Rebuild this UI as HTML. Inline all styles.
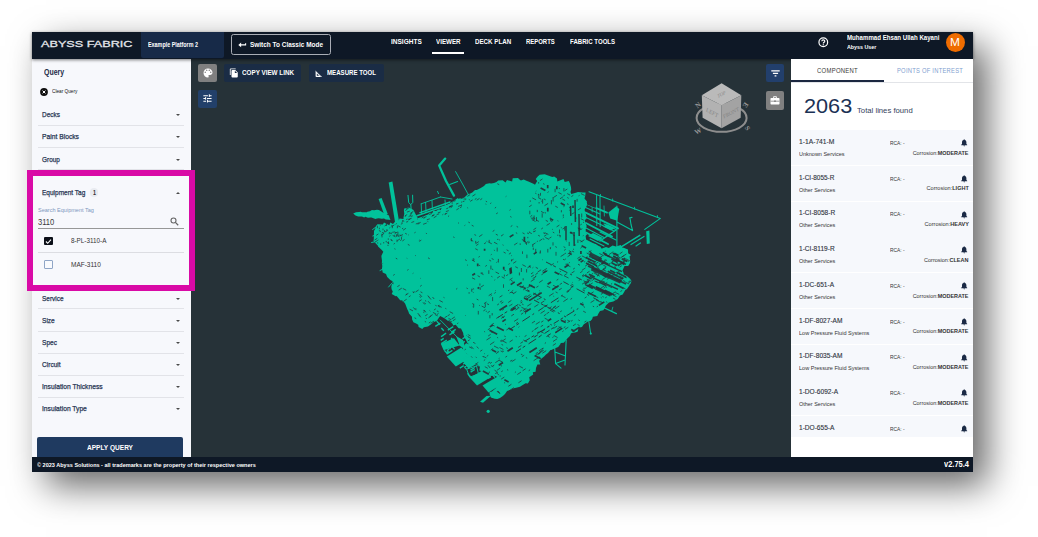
<!DOCTYPE html>
<html lang="en"><head><meta charset="utf-8"><title>Abyss Fabric - Viewer</title>
<style>
html,body{margin:0;padding:0;}
body{width:1038px;height:537px;overflow:hidden;background:#fff;position:relative;font-family:"Liberation Sans",sans-serif;}
#win{position:absolute;left:32px;top:32px;width:941px;height:440px;background:#263238;box-shadow:14px 14px 34px rgba(0,0,0,.6);}
.abs{position:absolute;}
.t{position:absolute;white-space:nowrap;line-height:1;transform-origin:0 50%;}
.t.r{transform-origin:100% 50%;}
.sep{position:absolute;left:37.5px;width:146.3px;height:1px;background:#e2e3e8;}
.arr{position:absolute;width:0;height:0;border-left:2.4px solid transparent;border-right:2.4px solid transparent;border-top:2.7px solid #4a4a4a;}
.item{position:absolute;left:791px;width:182px;height:35px;background:#f6f8fc;}
svg{position:absolute;overflow:visible;}
</style></head><body>
<div id="win"></div>

<div class="abs" style="left:32px;top:59px;width:159.3px;height:398px;background:#f7f8fc;"></div>
<svg style="left:39.5px;top:87.7px" width="8" height="8" viewBox="0 0 8 8"><circle cx="4" cy="4" r="3.9" fill="#111"/><path d="M2.6 2.6 L5.4 5.4 M5.4 2.6 L2.6 5.4" stroke="#fff" stroke-width="1"/></svg>
<div class="sep" style="top:124.7px"></div>
<div class="sep" style="top:147.1px"></div>
<div class="sep" style="top:169.4px"></div>
<div class="sep" style="top:285.5px"></div>
<div class="sep" style="top:308.0px"></div>
<div class="sep" style="top:330.8px"></div>
<div class="sep" style="top:352.7px"></div>
<div class="sep" style="top:374.8px"></div>
<div class="sep" style="top:397.0px"></div>
<div class="arr" style="left:175.7px;top:114.0px"></div>
<div class="arr" style="left:175.7px;top:136.0px"></div>
<div class="arr" style="left:175.7px;top:158.6px"></div>
<div class="arr" style="left:175.7px;top:191.7px;border-top:none;border-bottom:2.7px solid #4a4a4a;"></div>
<div class="arr" style="left:175.7px;top:298.0px"></div>
<div class="arr" style="left:175.7px;top:319.7px"></div>
<div class="arr" style="left:175.7px;top:341.5px"></div>
<div class="arr" style="left:175.7px;top:363.6px"></div>
<div class="arr" style="left:175.7px;top:385.7px"></div>
<div class="arr" style="left:175.7px;top:408.0px"></div>
<div class="abs" style="left:90px;top:188.4px;width:8.2px;height:8.2px;border-radius:50%;background:#e9ebf0;"></div>
<div class="abs" style="left:37.7px;top:228.3px;width:146.1px;height:1px;background:#979797;"></div>
<svg style="left:169.6px;top:217.2px" width="9" height="9" viewBox="0 0 9 9"><circle cx="3.5" cy="3.5" r="2.5" fill="none" stroke="#666" stroke-width="1.1"/><path d="M5.4 5.4 L8.2 8.2" stroke="#666" stroke-width="1.3"/></svg>
<div class="abs" style="left:44.2px;top:236.6px;width:8.8px;height:8.8px;background:#0b0f18;border-radius:1px;"></div>
<svg style="left:44.2px;top:236.6px" width="8.8" height="8.8" viewBox="0 0 8.8 8.8"><path d="M1.9 4.5 L3.7 6.3 L7 2.7" fill="none" stroke="#fff" stroke-width="1.1"/></svg>
<div class="abs" style="left:37.7px;top:251.8px;width:146.1px;height:1px;background:#dcdde2;"></div>
<div class="abs" style="left:44.2px;top:260px;width:6.8px;height:6.8px;border:1px solid #8fa5c6;border-radius:1px;background:#f9fafd;"></div>
<div class="abs" style="left:37.4px;top:437.1px;width:146px;height:20px;background:#1f3a60;border-radius:2px 2px 0 0;"></div>
<div class="abs" style="left:32px;top:32px;width:941px;height:27px;background:#0e1826;box-shadow:0 1px 3px rgba(0,0,0,.5);"></div>
<div class="abs" style="left:141px;top:32px;width:82.6px;height:25.5px;background:#172a48;border-radius:0 0 2px 2px;"></div>
<div class="abs" style="left:231px;top:34.4px;width:98.2px;height:18.2px;border:1.2px solid #a9adb5;border-radius:2.5px;"></div>
<svg style="left:238px;top:40.8px" width="9" height="7" viewBox="0 0 9 7"><path d="M0.3 3.9 L3.1 1.5 V6.3 Z" fill="#fff"/><path d="M2 3.9 H7.6 V2.3" fill="none" stroke="#fff" stroke-width="1.1"/></svg>
<div class="abs" style="left:432px;top:52px;width:32px;height:1.8px;background:#fff;"></div>
<svg style="left:817.5px;top:36.8px" width="10.6" height="10.6" viewBox="0 0 10 10"><circle cx="5" cy="5" r="4.1" fill="none" stroke="#fff" stroke-width="1.15"/><path d="M3.6 4.1 C3.6 2.3 6.4 2.3 6.4 4 C6.4 5 5 5 5 6.2" fill="none" stroke="#fff" stroke-width="1.1"/><rect x="4.45" y="6.8" width="1.1" height="1.1" fill="#fff"/></svg>
<div class="abs" style="left:945.8px;top:33.1px;width:19px;height:19px;border-radius:50%;background:#ef6c00;"></div>
<div class="abs" style="left:27px;top:170px;width:156px;height:109px;border:6px solid #d90aa6;"></div>
<div class="abs" style="left:198px;top:63.8px;width:19px;height:18.7px;background:#808080;border-radius:2px;"></div>
<svg style="left:201.9px;top:67.4px" width="12" height="12" viewBox="0 0 24 24"><path fill="#fff" d="M12 3c-4.97 0-9 4.030-9 9s4.030 9 9 9c.83 0 1.500-.67 1.500-1.500 0-.39-.15-.74-.39-1.010-.23-.26-.38-.61-.38-.99 0-.83.67-1.500 1.500-1.500H16c2.760 0 5-2.240 5-5 0-4.420-4.030-8-9-8zm-5.500 9c-.83 0-1.500-.67-1.500-1.500S5.670 9 6.500 9 8 9.670 8 10.500 7.330 12 6.500 12zm3-4C8.670 8 8 7.330 8 6.500S8.670 5 9.500 5s1.500.67 1.500 1.500S10.330 8 9.500 8zm5 0c-.83 0-1.500-.67-1.500-1.500S13.670 5 14.500 5s1.500.67 1.500 1.500S15.330 8 14.500 8zm3 4c-.83 0-1.500-.67-1.500-1.500S16.670 9 17.500 9s1.500.67 1.500 1.500-.67 1.500-1.500 1.500z"/></svg>
<div class="abs" style="left:198px;top:89.6px;width:19px;height:18.2px;background:#22406a;border-radius:2px;"></div>
<svg style="left:202.3px;top:93px" width="10.94" height="10.94" viewBox="0 0 24 24"><path fill="#fff" d="M3 17v2h6v-2H3zM3 5v2h10V5H3zm10 16v-2h8v-2h-8v-2h-2v6h2zM7 9v2H3v2h4v2h2V9H7zm14 4v-2H11v2h10zm-6-4h2V7h4V5h-4V3h-2v6z"/></svg>
<div class="abs" style="left:224px;top:63.8px;width:77.4px;height:18.5px;background:#1a2c45;border-radius:2px;"></div>
<svg style="left:229.16px;top:68.28px" width="10.04" height="10.04" viewBox="0 0 24 24"><path fill="#fff" d="M16 1H4c-1.100 0-2 .9-2 2v14h2V3h12V1zm-1 4l6 6v10c0 1.100-.9 2-2 2H7.990C6.890 23 6 22.100 6 21l.010-14c0-1.100.89-2 1.990-2h7zm-1 7h5.500L14 6.500V12z"/></svg>
<div class="abs" style="left:309px;top:63.8px;width:74.6px;height:18.5px;background:#1a2c45;border-radius:2px;"></div>
<svg style="left:314px;top:68.6px" width="9.6" height="9.6" viewBox="0 0 24 24"><path fill="#fff" d="M17.660 17.660l-1.060 1.060-.71-.71 1.060-1.060-1.940-1.940-1.060 1.060-.71-.71 1.060-1.060-1.940-1.940-1.060 1.060-.71-.71 1.060-1.060L9.700 9.700l-1.060 1.060-.71-.71 1.060-1.060-1.940-1.940-1.060 1.060-.71-.71 1.060-1.060L4 4v14c0 1.100.9 2 2 2h14l-2.340-2.340zM7 17v-5.760L12.760 17H7z"/></svg>
<div class="abs" style="left:766px;top:63.9px;width:18px;height:18.4px;background:#223f6c;border-radius:2px;"></div>
<svg style="left:770.5px;top:69.6px" width="9" height="7" viewBox="0 0 9 7"><path d="M0.3 0.9 H8.7 M1.9 3.4 H7.1 M3.6 5.9 H5.4" stroke="#fff" stroke-width="1.1"/></svg>
<div class="abs" style="left:766px;top:91.4px;width:18px;height:18.6px;background:#808080;border-radius:2px;"></div>
<svg style="left:770px;top:96px" width="10" height="9" viewBox="0 0 10 9"><path d="M3.6 2 V0.7 H6.4 V2" fill="none" stroke="#fff" stroke-width="0.9"/><rect x="0.5" y="2" width="9" height="6.4" rx="0.7" fill="#fff"/><path d="M0.5 5.2 H9.5" stroke="#808080" stroke-width="0.8"/><rect x="4.2" y="4.4" width="1.6" height="1.6" fill="#808080"/></svg>
<svg style="left:0;top:0" width="1038" height="537" viewBox="0 0 1038 537">
<ellipse cx="721.6" cy="118" rx="25" ry="13.8" fill="none" stroke="#8e8e8e" stroke-width="2"/>
<path d="M721.6 83.2 L741.3 95.2 L721.6 105.2 L701.8 95.2 Z" fill="#bababa"/>
<path d="M701.8 95.2 L721.6 105.2 L721.6 128.2 L702.6 117.8 Z" fill="#b2b2b2"/>
<path d="M741.3 95.2 L721.6 105.2 L721.6 128.2 L740.7 117.8 Z" fill="#a3a3a3"/>
<g font-family="'Liberation Serif',serif" fill="#858585" text-anchor="middle">
<text font-size="4.8" transform="translate(721.6 96) rotate(-28) skewX(-20)">TOP</text>
<text font-size="5.6" transform="translate(711.6 114.4) rotate(27) skewX(10)" >LEFT</text>
<text font-size="5.4" transform="translate(731.6 114.6) rotate(-27) skewX(-10)">FRONT</text>
<g font-weight="bold" fill="#969696" font-size="7">
<text transform="translate(699.6 107) rotate(-38)">N</text>
<text transform="translate(743.6 103.6) rotate(125)">E</text>
<text transform="translate(699.2 133.2) rotate(-28)">W</text>
<text transform="translate(745.6 129.4) rotate(58)">S</text>
</g></g></svg>
<svg style="left:0;top:0" width="1038" height="537" viewBox="0 0 1038 537">
<g fill="#01c29b" stroke="none">
<path d="M373.5 241.0 L373.8 238.9 L373.9 234.6 L374.0 231.0 L375.1 229.1 L376.0 226.0 L377.4 224.2 L382.8 224.6 L384.0 222.5 L389.3 225.2 L390.3 222.5 L393.0 224.0 L395.6 221.1 L398.0 222.5 L399.5 218.5 L403.5 219.0 L403.5 217.4 L404.3 213.7 L403.9 210.5 L404.2 208.5 L409.0 207.6 L413.5 210.0 L415.5 214.0 L417.7 218.0 L417.0 220.0 L418.8 218.0 L420.4 218.5 L424.0 216.5 L427.4 215.1 L429.8 212.8 L432.4 213.1 L433.3 210.8 L436.0 211.0 L439.3 209.1 L440.2 210.7 L442.4 206.5 L446.0 206.0 L446.6 205.7 L451.6 202.3 L454.0 200.8 L457.8 198.1 L458.2 198.7 L462.0 198.0 L464.3 197.4 L468.0 194.0 L469.7 193.8 L472.3 192.4 L475.0 190.0 L476.8 190.1 L480.3 188.2 L484.0 186.0 L485.9 183.9 L489.4 183.2 L491.1 183.5 L494.0 183.0 L496.5 182.0 L498.2 180.5 L502.7 180.2 L505.5 182.6 L507.0 180.0 L512.1 181.6 L512.7 178.3 L518.1 178.0 L518.9 179.0 L520.9 180.6 L523.7 179.4 L527.0 181.0 L528.4 181.4 L533.4 183.8 L535.0 184.7 L537.2 181.1 L535.7 179.0 L537.7 176.6 L539.6 174.8 L544.7 174.3 L546.7 174.9 L552.3 176.9 L554.2 176.4 L557.0 178.5 L557.3 181.4 L563.5 179.0 L564.7 182.1 L568.8 181.1 L569.9 183.3 L571.0 187.2 L571.2 189.5 L570.5 191.9 L571.3 194.0 L575.8 192.8 L578.0 192.0 L582.9 192.5 L585.6 192.5 L585.3 195.6 L584.5 198.5 L587.0 201.6 L586.6 204.0 L587.0 205.3 L584.6 209.7 L585.3 212.8 L586.2 215.0 L586.5 219.0 L584.7 220.0 L585.3 222.3 L586.7 225.9 L585.7 229.4 L585.9 233.1 L587.3 234.1 L585.6 236.1 L586.2 240.0 L590.1 242.8 L592.0 243.5 L595.9 244.1 L596.8 244.9 L599.2 247.6 L602.0 248.5 L606.0 247.0 L608.8 247.9 L612.5 245.4 L616.0 246.5 L620.8 245.0 L622.2 247.4 L623.6 247.7 L628.0 249.5 L628.1 253.2 L631.0 255.0 L629.6 256.3 L630.2 260.7 L630.0 263.0 L628.2 265.9 L624.5 266.0 L622.5 270.5 L623.4 272.5 L623.8 274.6 L626.9 276.1 L630.3 279.0 L631.5 281.0 L630.8 283.3 L629.7 285.1 L627.0 289.0 L625.3 290.1 L622.7 294.6 L620.0 295.5 L617.7 299.1 L615.0 300.5 L613.3 301.4 L609.0 302.6 L605.9 305.4 L604.9 307.5 L603.4 310.3 L600.0 311.0 L598.2 313.9 L597.3 316.1 L592.9 316.8 L592.2 319.0 L590.5 321.0 L588.6 320.9 L583.6 324.5 L582.0 327.0 L578.5 327.7 L577.8 331.6 L576.1 332.3 L571.1 333.3 L569.9 335.9 L567.3 338.6 L566.0 340.0 L563.8 342.7 L560.8 343.0 L560.3 344.2 L558.2 346.9 L554.5 348.5 L551.4 350.1 L550.5 350.1 L548.0 353.0 L546.0 354.5 L544.1 356.5 L541.9 358.3 L539.1 360.8 L540.3 364.4 L537.4 364.5 L536.0 368.0 L535.6 371.8 L532.8 372.2 L533.2 374.6 L529.2 377.3 L529.8 380.3 L527.9 383.4 L525.6 383.3 L521.5 385.7 L520.0 386.8 L516.2 387.8 L513.8 388.3 L511.2 389.5 L507.1 390.9 L505.0 394.0 L502.9 396.1 L500.0 398.0 L497.3 398.9 L494.7 398.7 L490.9 397.6 L489.6 394.2 L489.5 392.0 L491.9 391.5 L496.0 388.0 L496.9 384.2 L500.0 382.0 L498.5 377.5 L494.0 375.5 L491.0 376.0 L488.1 375.4 L485.2 373.9 L483.0 371.5 L479.3 370.5 L479.9 366.6 L477.0 365.9 L474.0 364.0 L471.1 360.4 L467.8 359.6 L468.0 357.0 L466.5 352.9 L463.2 352.6 L463.0 348.0 L465.3 344.1 L467.2 342.5 L466.0 340.0 L464.2 337.0 L463.3 334.6 L463.2 333.0 L461.0 328.5 L458.6 328.2 L455.7 324.7 L452.9 325.5 L452.8 324.0 L450.0 321.5 L447.3 320.4 L446.5 319.7 L443.9 318.1 L440.2 316.0 L438.9 317.8 L436.9 320.8 L433.5 322.3 L431.5 324.1 L428.0 326.5 L423.9 327.3 L422.3 329.0 L418.6 326.9 L418.2 324.8 L416.1 323.5 L413.4 322.3 L412.1 319.4 L412.0 316.8 L409.0 313.4 L408.6 312.1 L407.2 309.0 L405.2 303.8 L404.3 302.4 L400.0 300.0 L396.6 296.1 L395.7 296.2 L391.7 294.0 L392.8 291.4 L391.6 289.3 L391.3 286.8 L392.6 281.2 L390.3 280.0 L387.2 277.0 L386.0 274.0 L382.7 272.6 L382.0 268.6 L382.3 266.1 L381.8 263.5 L382.0 260.8 L381.4 256.6 L381.4 255.8 L383.3 251.8 L381.8 249.9 L378.0 246.5 L378.1 245.9 Z"/>
<path d="M353.2 213.6 L356.0 212.3 L359.0 212.1 L360.8 211.8 L362.0 212.2 L364.7 212.3 L366.8 212.3 L367.4 211.7 L370.0 211.3 L371.9 210.1 L374.1 210.2 L377.0 209.8 L378.9 210.1 L381.0 211.2 L382.9 212.6 L385.0 213.2 L387.8 215.1 L389.0 215.5 L389.3 217.1 L390.5 220.0 L388.8 219.7 L385.8 219.4 L384.0 218.6 L381.8 218.8 L378.8 218.2 L377.0 218.6 L375.4 219.0 L371.4 217.6 L370.4 217.4 L368.0 217.8 L365.3 216.8 L364.1 217.4 L362.0 216.4 L360.0 216.6 L358.1 216.6 L355.5 215.6 Z"/>
<path d="M378.6 198.9 L381.6 198 L387.8 214 L384.5 215.6 Z"/>
<path d="M388.7 182.4 L392.4 181.4 L399.4 223.5 L395.4 224.6 Z"/>
<path d="M440.8 343.8 L454 338.2 L459.5 345.5 L443.6 350.2 Z"/>
<path d="M446.8 356.4 L461.4 347.6 L470.5 357.5 L455.8 366.6 Z"/>
<path d="M470 377.8 L484 369.6 L491 377 L477 385.4 Z"/>
<path d="M482.5 385.6 L498.5 376 L503 383.5 L488.5 392.5 Z"/>
<path d="M462 360.5 L470 356 L476.5 364 L468.5 368.5 Z"/>
<path d="M456 336 L463 340 L466 350 L460 346 Z"/>
<circle cx="488.2" cy="411.3" r="1.6"/>
<path d="M480 401.8 L486.5 396 L491 395.8 L483 402.8 Z"/>
<path d="M608.4 212.5 L616 206.4 L619.3 209 L617.2 220.8 L610.2 218.4 Z"/>
<path d="M646.2 231.2 L649.4 230.4 L649.8 243.4 L646.8 244 Z"/>
</g>
<g fill="none" stroke="#01c29b" stroke-linecap="round" stroke-linejoin="round">
<path d="M445.2 158.6 L439.2 165.6 L446 181 L454 195.6" stroke-width="2.3"/>
<path d="M449.7 184.4 L457.6 181.6" stroke-width="1.1"/>
<path d="M455.6 171.6 L462 183 L468 194" stroke-width="0.9"/>
<path d="M437.6 191.4 L438.5 193.6" stroke-width="1"/>
<path d="M408 195.4 L408.7 202.6 L410.8 204.6 L412.8 202.4 L412.6 195.2 M410.8 204.6 L411.2 210" stroke-width="1"/>
<path d="M421.2 203.8 L440.5 197 M421.2 203.8 L421.6 213.5 M425.6 202.4 L426 212 M440.5 197 L452 199 M432 200.4 L432.4 209 M445 200 L445.4 205" stroke-width="0.9"/>
<path d="M417 215.8 L455.6 202.4 M418 219 L456 205.4 M420 212.6 L450 202" stroke-width="1.5"/>
<path d="M371.6 242.5 L376 241.5 M380 270.5 L385 268 M388.6 287 L392 283 M372.6 229.5 L378 225.5 M372.8 236 L377 234.6" stroke-width="1"/>
<path d="M589 191.8 L660.4 218.4 L644.8 229.4" stroke-width="1.1"/>
<path d="M600.4 194.4 L600.6 196.6 M612.6 199 L612.8 201.2 M634.5 207.2 L634.8 209.4 M657.4 215.6 L657.6 217.6" stroke-width="0.9"/>
<path d="M596.6 195.5 L596.8 225.6 M600 196.6 L600.2 226.8" stroke-width="1"/>
<path d="M616.9 206 L616.9 249" stroke-width="1.1"/>
<path d="M585.6 203.5 L607 212.6 M585.6 212.6 L618 228.4 M586 223 L612 236.6 M586 232.5 L608 244 M586 240.5 L600 247.6" stroke-width="1.9"/>
<path d="M585.6 207.5 L600 214 M586 217.5 L614 231 M586 228 L604 237.4 M590 239 L604 246 M604 224 L616 229.6 M600 232 L616 240" stroke-width="1.1"/>
<path d="M588 236 L598 241 L603 238 L593 233 Z M603 226.5 L611 230.4 L615 228 L607 224.2 Z" fill="#01c29b" stroke="none"/>
<path d="M616.9 222 L632.6 230.6 M630 218.2 L631 224.5 L632.6 230.6 M629.4 218 L632 217.4" stroke-width="1.1"/>
<path d="M639.8 235.3 L618 248.8 M600 241 L616 230" stroke-width="1.5"/>
<path d="M644 236.4 L631 244.6 M636 246 L640.4 243" stroke-width="1.2"/>
<path d="M604 206 L604.4 216 M592 200 L592.2 212" stroke-width="0.8"/>
<path d="M554.6 346 L555.6 363.6 L561 368.2 M566.2 340 L565 365 M555 352 L565.6 356 M555.6 363.6 L565 360" stroke-width="1.1"/>
<path d="M588.6 320 L590.6 333" stroke-width="1"/>
<circle cx="590.8" cy="333.6" r="1.1" fill="#01c29b" stroke="none"/>
<path d="M596 304 L616.4 313.6" stroke-width="1.3"/>
<path d="M612.8 307.2 L611.8 311" stroke-width="0.8"/>
<path d="M440.2 320 L462.5 342.5" stroke-width="0.9"/>
<path d="M467 369 L476.5 366 L478.5 374 L470 377 Z" stroke-width="1"/>
</g>
<path d="M595.6 281.1 L599.6 283.1 M537.7 272.0 L541.1 269.8 M611.9 261.5 L614.5 259.8 M584.4 322.2 L586.4 320.9 M499.9 302.2 L502.2 300.7 M496.0 353.6 L498.5 351.9 M600.9 294.5 L602.7 293.3 M557.0 262.3 L558.1 261.6 M534.3 307.0 L538.4 304.4 M564.1 275.8 L568.5 278.0 M556.9 329.4 L561.4 326.5 M487.8 329.8 L490.0 328.4 M578.0 264.2 L580.0 265.3 M511.7 361.7 L515.5 359.3 M538.3 299.3 L541.8 297.1 M553.5 328.5 L557.1 326.1 M542.3 271.3 L546.9 268.4 M535.5 274.5 L537.9 272.9 M558.9 290.0 L561.7 288.3 M589.8 294.3 L593.6 291.8 M548.2 335.3 L550.3 333.9 M508.2 302.5 L511.4 300.4 M550.2 324.3 L552.0 325.2 M593.9 295.5 L598.2 297.7 M552.2 308.8 L555.6 306.6 M596.1 263.5 L598.5 261.9 M598.5 258.5 L602.7 255.7 M546.9 286.0 L550.2 287.7 M527.2 287.9 L530.5 285.7 M559.8 272.0 L560.8 271.3 M603.8 262.0 L607.0 259.9 M584.1 262.1 L585.2 261.4 M541.2 322.2 L543.4 320.8 M540.0 331.2 L543.7 333.1 M499.5 347.5 L503.4 349.5 M598.0 267.8 L599.1 268.4 M535.7 353.7 L537.8 352.3 M495.3 362.7 L499.6 359.9 M501.3 341.7 L505.7 338.8 M525.4 290.0 L529.2 291.9 M528.7 370.7 L530.1 369.8 M573.1 269.2 L574.8 268.1 M568.7 263.2 L569.8 262.4 M596.0 299.9 L600.6 302.2 M500.6 350.9 L503.0 352.1 M539.3 352.2 L542.7 350.0 M528.6 300.0 L530.1 300.7 M535.8 324.4 L539.8 321.8 M571.5 273.1 L574.5 271.2 M531.9 323.1 L535.0 321.1 M508.3 386.3 L511.4 384.3 M596.8 269.9 L600.1 271.6 M584.7 298.1 L586.6 296.8 M589.7 284.8 L592.7 282.9 M518.4 382.8 L521.6 380.7 M496.8 370.4 L500.2 368.1 M533.6 360.7 L537.6 358.1 M506.4 330.0 L509.0 328.3 M499.2 360.4 L502.6 362.1 M502.3 310.2 L503.8 309.2 M537.1 333.1 L539.3 331.7 M620.6 257.8 L624.2 255.5 M549.9 310.1 L553.8 312.1 M540.6 313.4 L544.9 310.6 M558.5 326.7 L561.2 328.0 M523.3 340.0 L527.2 341.9 M524.6 336.6 L526.5 335.4 M607.2 285.4 L612.0 287.8 M550.8 265.4 L553.8 263.5 M534.4 329.7 L536.2 328.6 M616.2 264.4 L617.7 263.4 M523.8 297.4 L526.4 295.7 M546.9 327.4 L549.1 326.0 M567.6 256.7 L570.2 255.0 M526.0 297.4 L530.4 294.5 M509.6 293.1 L511.3 292.0 M606.2 301.7 L607.3 302.3 M563.7 327.8 L565.4 326.7 M612.7 257.3 L614.8 255.9 M519.9 311.4 L522.1 309.9 M541.5 274.7 L543.0 273.8 M583.7 289.3 L586.6 287.4 M523.2 289.9 L526.3 287.9 M513.0 293.9 L516.4 291.7 M520.4 343.4 L523.0 341.7 M560.2 311.8 L561.8 310.8 M505.4 357.2 L507.1 356.1 M592.8 306.2 L594.1 306.8 M487.8 363.4 L490.0 362.0 M522.6 370.8 L525.7 368.7 M596.0 266.4 L598.0 267.4 M514.1 321.4 L518.2 318.8 M570.3 288.2 L573.5 286.1 M611.6 276.3 L614.8 274.2 M609.1 254.5 L613.3 251.7 M565.0 329.3 L568.3 327.2 M577.5 324.5 L579.5 325.6 M502.5 350.8 L503.8 351.5 M540.8 303.2 L544.4 300.9 M498.6 358.7 L499.6 358.1 M540.7 326.7 L543.1 325.2 M523.6 312.0 L528.1 309.0 M619.2 281.9 L621.7 280.3 M577.4 258.5 L580.5 256.6 M619.4 275.9 L624.0 278.3 M510.6 305.3 L512.4 304.1 M531.2 276.8 L533.9 275.0 M539.2 336.7 L541.9 334.9 M553.0 341.5 L557.1 338.8 M509.3 305.9 L510.5 305.1 M573.0 325.8 L575.9 323.9 M486.8 356.3 L488.3 355.3 M514.9 372.5 L515.9 371.8 M527.3 306.1 L531.4 303.5 M536.3 287.4 L538.4 286.1 M571.0 321.3 L572.6 320.3 M525.8 311.9 L528.6 310.0 M561.9 295.8 L565.5 297.7 M520.9 354.1 L522.5 354.9 M557.1 301.9 L559.1 300.6 M530.8 281.5 L534.8 278.9 M563.4 301.6 L567.8 298.7 M610.9 284.3 L612.2 283.4 M543.4 307.3 L546.2 305.5 M620.4 291.5 L622.2 290.4 M619.6 279.5 L621.9 278.0 M517.3 374.5 L520.9 372.2 M553.8 335.5 L557.6 337.5 M613.6 260.6 L615.8 259.1 M518.1 347.5 L521.4 345.4 M536.8 299.9 L537.9 299.1 M586.2 281.6 L589.5 279.5 M573.0 310.0 L574.3 310.7 M582.6 289.8 L585.0 291.1 M582.1 284.2 L586.4 281.4 M595.1 261.5 L597.0 260.3 M601.3 280.4 L605.0 282.2 M502.4 340.8 L506.6 342.9 M522.9 310.6 L526.6 308.2 M559.7 284.6 L562.0 283.1 M613.5 295.3 L616.5 296.8 M581.9 255.9 L586.3 258.1 M538.0 354.5 L540.4 353.0 M582.5 276.8 L586.5 274.2 M542.4 353.2 L546.2 350.7 M497.2 305.0 L499.0 303.8 M583.2 311.2 L585.8 312.5 M581.9 270.3 L585.5 267.9 M521.8 356.8 L524.2 355.2 M608.9 275.0 L611.0 273.6 M521.4 307.2 L525.4 309.2 M600.4 271.4 L604.4 268.8 M501.2 379.1 L504.3 377.1 M500.0 341.3 L502.1 339.9 M562.4 331.6 L563.6 330.8 M614.6 295.2 L615.6 294.5 M531.8 331.7 L533.5 330.6 M522.5 286.4 L525.8 288.1 M621.9 256.9 L626.4 254.0 M563.0 259.2 L564.1 259.8 M510.2 390.1 L513.9 387.6 M518.5 285.8 L521.1 287.1 M539.5 353.0 L543.8 350.2 M499.5 297.2 L502.4 295.4 M573.9 315.7 L575.9 314.4 M591.5 280.9 L594.4 278.9 M582.1 275.9 L583.6 274.9 M535.0 276.6 L536.1 275.9 M554.9 308.9 L559.3 306.0 M488.2 336.0 L490.7 334.3 M625.3 282.1 L629.3 284.1 M486.5 340.0 L490.7 337.3 M555.2 332.9 L556.7 332.0 M544.7 318.2 L547.7 319.7 M535.4 329.0 L538.3 327.2 M546.4 336.6 L550.7 333.8 M501.2 318.4 L504.9 316.0 M525.9 357.6 L527.2 358.2 M615.3 266.2 L619.3 263.6 M586.9 286.6 L589.5 284.9 M508.0 290.8 L509.3 290.0 M553.1 285.3 L557.4 287.5 M501.2 303.4 L503.4 302.0 M511.6 292.1 L513.4 293.0 M509.6 341.9 L512.7 339.9 M578.7 280.5 L580.4 279.4 M497.6 351.3 L498.8 351.9 M520.6 287.8 L523.8 285.7 M532.7 278.6 L536.2 276.4 M590.6 302.6 L594.4 300.2 M518.7 304.7 L520.8 305.8 M492.5 325.0 L494.5 326.0 M566.6 291.6 L571.1 288.7 M490.0 344.7 L494.3 341.8 M537.3 358.5 L539.9 356.8 M521.0 314.4 L523.1 313.0 M515.4 310.1 L518.6 308.0 M494.0 346.0 L498.5 348.3 M535.3 355.6 L539.9 352.6 M580.2 272.7 L582.5 271.2 M549.1 296.1 L553.6 293.2 M548.7 308.6 L551.6 306.7 M567.4 322.6 L570.3 320.8 M492.7 366.0 L494.3 365.0 M591.5 287.0 L595.6 289.1 M496.3 318.4 L498.7 316.9 M541.2 331.9 L545.0 329.4 M564.3 259.9 L565.8 258.9 M491.5 324.8 L493.8 323.3 M515.6 336.3 L516.9 336.9 M511.3 315.9 L514.0 314.2 M608.2 265.2 L609.7 264.2 M564.3 275.4 L566.8 273.7 M587.0 272.9 L589.5 271.3 M596.7 306.9 L598.0 306.1 M552.8 345.5 L555.9 343.5 M538.4 293.7 L540.2 292.5 M490.9 365.6 L493.4 366.8 M543.9 315.8 L546.0 314.4 M559.3 273.8 L562.4 275.4 M539.2 282.5 L542.7 280.2 M535.1 336.6 L536.2 335.9 M533.9 337.3 L538.0 334.7 M510.1 361.3 L512.2 360.0 M554.1 325.4 L555.3 324.6 M519.3 366.2 L522.9 368.0 M565.5 264.2 L570.4 266.7 M605.2 297.9 L606.8 296.9 M553.0 307.7 L556.0 305.8 M542.0 349.2 L543.6 348.2 M490.8 350.1 L493.1 348.5 M546.5 313.8 L549.1 312.1 M538.8 350.9 L543.1 348.1 M510.3 310.6 L514.3 307.9 M544.1 305.1 L547.0 306.6 M583.5 306.6 L585.0 307.4 M591.6 274.3 L593.3 273.2 M531.0 273.9 L533.3 272.4 M547.3 336.0 L549.7 337.2 M567.3 320.1 L569.7 321.3 M603.2 269.7 L606.3 271.3 M628.3 282.0 L630.3 280.7 M613.1 255.9 L616.0 257.4 M598.9 263.6 L600.3 264.4 M596.5 288.6 L598.9 289.8 M613.1 298.1 L615.5 299.3 M597.1 276.1 L598.6 275.2 M608.7 264.4 L610.7 263.1 M599.4 253.5 L603.7 255.7 M624.3 276.6 L626.9 277.9 M595.1 273.7 L596.8 274.6 M604.4 284.3 L607.3 282.3 M588.1 259.1 L591.4 260.8 M621.0 279.2 L623.0 277.9 M586.7 253.0 L591.0 255.2 M593.1 262.6 L596.2 264.2 M612.9 293.4 L615.6 291.7 M620.9 262.2 L624.3 264.0 M617.4 256.4 L620.5 258.0 M602.9 269.2 L606.3 266.9 M613.1 260.4 L617.1 262.4 M606.9 279.4 L610.8 276.8 M614.0 266.8 L616.0 267.8 M624.9 259.6 L628.7 261.5 M617.3 272.4 L620.5 270.3 M593.6 271.8 L596.9 273.4 M603.3 265.2 L606.1 266.6 M606.3 294.0 L609.5 291.9 M615.9 275.2 L619.7 272.7 M587.5 261.3 L591.1 263.2 M628.6 282.8 L631.2 281.1 M614.7 261.3 L617.7 262.8 M603.6 288.3 L605.1 287.3 M601.8 293.2 L606.0 290.5 M586.8 279.1 L590.8 281.2 M602.4 279.5 L605.8 277.3 M611.2 262.6 L614.1 260.7 M619.6 267.2 L621.8 265.7 M607.2 274.4 L610.5 272.3 M588.6 252.4 L591.4 250.6 M619.7 253.8 L622.5 251.9 M591.9 268.2 L594.4 269.5 M596.9 267.9 L599.9 269.5 M602.7 270.2 L605.8 268.2 M623.2 280.6 L625.1 281.5 M589.5 254.3 L593.2 256.1 M596.4 274.5 L599.8 276.2 M597.7 266.5 L601.0 264.4 M594.3 273.7 L595.6 272.8 M597.2 275.3 L599.1 274.0 M594.5 281.0 L597.8 282.7 M625.7 258.8 L629.9 260.9 M615.8 258.6 L618.9 256.6 M600.4 288.5 L604.2 286.0 M594.6 268.2 L597.5 269.7 M615.4 292.5 L619.2 294.4 M585.1 266.2 L588.6 263.9 M607.1 276.7 L608.6 275.7 M588.8 251.0 L591.8 252.6 M586.1 257.6 L587.5 256.7 M571.4 196.6 L573.3 195.3 M543.8 198.9 L545.6 199.8 M547.5 192.5 L548.7 191.7 M575.8 217.4 L575.8 219.1 M556.0 251.9 L556.0 255.7 M549.3 238.3 L551.4 237.0 M545.7 220.3 L548.0 221.5 M573.0 249.0 L574.0 249.5 M539.9 180.7 L542.5 178.9 M538.8 194.1 L538.8 197.5 M565.7 240.5 L566.8 241.1 M553.1 197.0 L553.1 201.5 M580.5 248.2 L581.7 247.4 M555.3 206.2 L557.8 207.5 M540.4 250.4 L540.4 252.7 M583.0 222.7 L583.9 222.1 M529.8 210.7 L529.8 214.3 M579.1 227.7 L579.1 230.8 M558.4 192.5 L561.7 194.2 M536.0 220.0 L538.9 221.4 M580.8 229.6 L582.3 228.7 M563.3 196.0 L564.9 195.0 M540.5 192.9 L540.5 195.7 M532.4 244.9 L535.5 242.9 M530.8 217.8 L534.2 219.5 M579.5 240.3 L582.4 241.8 M560.6 256.6 L564.0 254.4 M540.1 251.8 L540.1 253.7 M567.2 193.6 L570.1 195.1 M537.8 194.8 L538.9 194.1 M532.3 197.9 L536.1 199.9 M563.9 188.1 L563.9 191.4 M561.4 210.2 L561.4 212.3 M558.8 188.2 L559.9 188.8 M544.5 205.7 L548.1 203.4 M562.5 229.1 L564.8 227.6 M553.0 242.3 L553.0 245.5 M549.6 218.7 L550.7 218.0 M532.5 217.3 L535.3 218.7 M569.2 241.9 L569.2 246.0 M543.1 183.6 L544.5 184.3 M577.9 210.0 L580.8 208.1 M529.2 206.7 L531.7 205.1 M535.2 193.1 L536.4 193.7 M533.2 231.8 L534.3 231.1 M574.5 244.5 L575.9 245.2 M557.5 220.7 L558.4 221.1 M581.7 213.5 L581.7 217.5 M539.1 202.0 L539.1 203.5 M545.3 237.5 L549.1 239.4 M527.1 232.9 L528.9 233.8 M539.3 241.0 L542.2 239.1 M581.0 193.6 L584.6 195.4 M542.6 199.1 L542.6 203.6 M568.9 250.7 L571.6 252.1 M564.7 226.5 L564.7 230.6 M538.3 197.7 L541.2 199.2 M546.6 225.4 L549.8 223.4 M563.3 214.5 L563.3 216.5 M541.3 229.0 L542.9 227.9 M564.1 250.4 L565.7 249.4 M544.1 236.3 L546.6 234.7 M537.3 209.9 L537.3 212.1 M567.3 197.5 L568.7 198.3 M550.6 217.8 L550.6 220.3 M541.0 211.4 L544.1 213.0 M571.6 223.2 L571.6 224.8 M533.4 229.8 L536.2 227.9 M547.8 248.9 L547.8 252.5 M557.8 234.7 L557.8 235.9 M550.3 247.3 L550.3 249.2 M550.1 248.3 L551.1 247.6 M562.8 218.0 L563.7 217.4 M555.1 188.8 L555.1 192.2 M544.6 232.6 L548.3 234.4 M556.6 226.9 L559.4 225.1 M551.4 200.1 L551.4 204.3 M530.3 200.4 L530.3 201.8 M560.1 235.3 L560.1 237.3 M550.1 220.5 L552.2 221.6 M580.8 218.7 L583.8 220.2 M527.8 236.9 L527.8 238.2 M564.7 190.7 L567.3 189.0 M529.8 232.6 L531.8 233.6 M578.6 195.9 L579.5 195.4 M577.9 239.6 L577.9 243.0 M534.1 215.5 L534.1 219.9 M538.6 182.1 L538.6 183.6 M522.5 232.8 L524.6 233.9 M580.7 242.1 L584.3 239.8 M531.8 219.6 L535.5 221.5 M533.8 232.0 L535.8 230.7 M530.4 216.5 L532.2 215.3 M567.8 253.9 L571.0 251.8 M535.7 248.9 L535.7 253.2 M577.1 198.9 L577.1 201.7 M577.7 228.0 L581.0 229.6 M542.2 213.3 L542.2 217.6 M553.6 197.4 L556.9 195.3 M552.8 232.1 L554.3 232.9 M560.0 198.8 L562.9 196.9 M559.5 229.5 L559.5 233.3 M571.6 214.3 L574.4 212.5 M544.7 212.5 L546.0 213.1 M536.5 217.1 L536.5 221.1 M572.8 234.8 L574.9 235.9 M562.4 199.1 L565.1 200.5 M580.1 227.7 L580.1 229.1 M529.4 231.6 L529.4 232.9 M536.8 241.8 L537.9 241.0 M479.2 236.6 L482.4 234.5 M527.9 243.2 L529.9 241.9 M511.5 259.4 L511.5 261.4 M473.3 258.2 L473.3 261.0 M519.4 272.5 L519.4 275.4 M501.0 236.1 L503.5 234.4 M476.2 245.5 L478.5 244.0 M509.5 280.0 L512.5 278.1 M497.2 247.6 L497.2 251.5 M481.7 306.1 L485.1 307.8 M484.1 243.8 L486.0 242.6 M489.9 315.0 L489.9 318.3 M501.7 276.8 L504.6 278.3 M479.9 283.5 L479.9 285.6 M470.5 239.8 L473.2 241.2 M485.3 266.4 L486.9 265.3 M496.4 262.5 L497.4 261.8 M493.9 250.1 L494.8 250.5 M526.9 254.6 L526.9 258.1 M497.1 278.1 L499.8 276.3 M491.3 276.3 L492.4 276.9 M490.9 265.6 L490.9 269.4 M483.4 310.9 L485.4 309.6 M513.2 263.3 L516.3 261.3 M471.9 260.0 L474.9 261.5 M498.7 239.5 L499.8 240.1 M486.9 303.7 L489.0 304.7 M491.7 258.5 L493.6 259.5 M511.5 260.5 L513.5 259.2 M471.5 289.0 L472.6 289.6 M515.9 232.7 L517.2 233.4 M486.3 310.8 L486.3 311.8 M535.7 267.3 L538.0 268.5 M480.5 273.1 L483.5 274.6 M510.8 280.3 L512.8 281.3 M488.8 270.3 L488.8 273.9 M503.5 284.3 L503.5 287.8 M514.1 245.0 L517.4 242.9 M480.7 287.2 L483.8 285.2 M526.5 243.0 L526.5 244.9 M485.3 303.9 L485.3 307.2 M489.2 239.9 L489.2 242.3 M521.9 239.5 L524.1 240.7 M494.0 242.2 L497.4 244.0 M477.6 275.7 L479.9 276.9 M506.6 249.8 L508.6 250.9 M504.4 274.6 L504.4 276.6 M522.5 251.4 L522.5 253.9 M490.7 296.0 L491.7 295.3 M484.1 303.6 L486.6 302.0 M475.7 243.6 L478.8 241.6 M488.3 242.0 L491.8 243.8 M523.2 278.3 L523.2 280.4 M478.5 257.2 L479.8 256.4 M525.3 243.3 L528.5 241.3 M473.7 303.7 L473.7 307.2 M471.4 238.0 L471.4 241.3 M471.7 289.3 L471.7 291.7 M521.4 268.0 L521.4 272.0 M526.6 269.1 L526.6 272.5 M503.6 252.1 L505.7 253.2 M478.3 310.9 L478.3 314.5 M515.3 266.7 L517.9 268.0 M472.0 277.8 L475.1 279.3 M469.1 292.2 L469.1 293.7 M532.5 267.9 L533.3 267.3 M498.4 258.9 L498.4 262.5 M525.3 241.0 L525.3 243.3 M529.8 265.3 L529.8 266.9 M508.9 254.2 L511.0 252.8 M495.6 272.0 L499.0 273.7 M491.9 269.0 L493.2 269.6 M480.2 287.6 L480.2 289.9 M503.7 269.6 L505.9 270.7 M497.6 238.9 L497.6 239.9 M475.3 248.7 L477.8 250.0 M492.6 297.1 L492.6 301.1 M487.5 312.8 L489.8 311.2 M485.2 302.7 L485.2 303.7 M506.2 275.7 L508.2 274.5 M488.7 295.7 L491.9 293.6 M520.2 243.4 L520.2 244.9 M532.8 244.3 L532.8 246.9 M489.2 260.1 L491.1 261.1 M527.4 267.9 L530.5 265.9 M475.7 240.9 L475.7 243.4 M522.4 264.7 L525.8 266.5 M490.8 254.9 L491.7 254.3 M533.3 247.7 L533.3 249.9 M492.2 313.1 L492.2 315.4 M395.6 224.3 L396.7 223.5 M400.9 224.3 L402.8 223.0 M383.7 242.1 L383.7 243.4 M402.0 228.9 L403.2 228.1 M399.3 235.0 L401.1 235.9 M380.7 243.4 L380.7 244.7 M401.5 237.1 L401.5 239.3 M400.2 240.6 L401.7 239.6 M378.9 230.5 L380.8 231.5 M386.7 242.3 L389.2 243.6 M381.2 235.3 L384.1 233.4 M402.2 234.0 L402.2 235.3 M386.2 240.9 L386.2 242.1 M384.9 232.1 L387.7 230.3 M376.2 235.4 L378.4 233.9 M389.3 236.3 L390.4 235.6 M400.1 235.1 L402.3 236.2 M377.4 225.7 L377.4 228.2 M394.0 235.7 L394.9 235.1 M379.4 227.7 L379.4 229.2 M401.6 222.3 L403.2 221.3 M397.4 225.8 L397.4 228.2 M397.3 240.7 L400.0 238.9 M391.8 225.2 L391.8 226.3 M397.0 239.6 L397.0 242.1 M397.7 225.6 L400.5 227.1 M383.0 228.6 L383.0 230.3 M377.7 242.4 L377.7 243.5 M384.5 230.2 L384.5 231.9 M402.3 241.0 L404.5 239.5 M391.0 233.5 L392.4 232.5 M391.6 226.7 L394.4 224.9 M382.0 234.1 L382.0 237.4 M388.0 244.8 L388.0 246.0 M379.8 225.8 L380.6 225.2 M396.4 234.4 L396.4 236.9 M393.2 231.5 L393.2 232.8 M389.2 232.7 L389.2 234.2 M396.9 234.4 L399.2 235.5 M390.7 239.5 L392.2 240.3 M397.9 231.8 L397.9 234.2 M389.1 232.5 L391.4 233.7 M396.4 235.2 L399.5 236.8 M388.5 241.5 L388.5 243.8 M394.7 233.7 L397.3 232.0 M388.3 238.4 L388.3 239.8 M389.4 228.0 L390.3 227.4 M377.2 240.7 L378.4 239.9 M375.0 242.1 L377.0 240.8 M374.6 240.0 L377.3 238.3 M384.6 226.0 L386.7 224.6 M386.4 223.3 L386.4 226.0 M383.6 232.4 L383.6 233.5 M394.0 231.7 L396.0 232.7 M392.4 225.6 L392.4 228.2 M393.6 244.1 L394.9 243.3 M405.2 233.3 L406.9 234.2 M392.7 235.4 L395.5 236.9 M386.9 229.2 L386.9 230.6 M403.1 230.2 L405.9 228.3 M408.0 219.5 L411.7 218.2 M456.0 204.1 L458.4 203.3 M465.2 199.8 L466.3 199.1 M442.4 214.8 L443.3 214.2 M474.8 199.5 L476.5 198.4 M410.5 213.2 L413.4 211.3 M406.2 222.1 L408.1 221.5 M461.0 205.5 L461.9 204.9 M462.7 201.7 L464.5 201.1 M433.7 217.8 L436.6 216.0 M426.8 219.8 L429.8 218.8 M436.7 214.6 L439.2 213.8 M432.0 215.7 L434.4 214.9 M405.0 216.4 L405.9 215.8 M421.7 218.0 L423.7 216.7 M405.3 210.5 L407.5 209.1 M449.3 206.6 L451.4 205.8 M456.4 209.9 L458.8 208.4 M472.4 196.2 L475.5 194.2 M453.5 201.3 L455.6 200.6 M446.3 208.7 L448.1 208.1 M409.9 214.5 L412.3 212.9 M415.8 224.0 L419.4 222.7 M467.4 196.4 L470.1 194.6 M448.7 207.3 L451.7 206.2 M445.9 211.6 L448.8 210.6 M406.1 208.9 L409.3 207.8 M428.8 214.5 L431.9 213.5 M463.7 199.5 L465.6 198.3 M404.7 216.1 L407.2 214.5 M460.7 198.7 L464.1 197.6 M408.6 216.7 L411.5 214.8 M451.7 203.6 L453.0 202.7 M444.5 214.3 L446.1 213.3 M406.1 219.5 L407.6 219.0 M458.1 206.4 L461.8 205.1 M449.7 207.2 L452.9 205.1 M461.1 202.2 L462.1 201.9 M445.0 214.5 L447.3 213.0 M411.4 222.5 L414.2 221.5 M450.8 207.6 L452.6 206.4 M406.9 212.1 L409.7 211.2 M417.7 224.3 L420.7 222.3 M470.2 201.4 L472.7 199.8 M423.1 224.3 L426.7 223.0 M476.7 200.2 L479.5 198.4 M431.7 216.4 L434.2 214.8 M423.6 217.7 L426.5 216.7 M410.5 216.6 L412.8 215.8 M437.9 212.9 L440.5 212.0 M438.2 305.5 L441.7 307.3 M482.5 356.5 L483.4 357.0 M438.0 305.2 L439.8 307.4 M447.5 315.9 L449.8 314.5 M497.9 390.9 L500.0 393.3 M404.1 300.9 L406.7 299.2 M494.6 369.8 L496.9 372.4 M448.5 320.2 L452.0 322.0 M398.6 290.2 L401.8 288.1 M408.8 296.9 L410.6 295.7 M402.8 288.5 L406.2 290.2 M428.5 296.6 L431.0 299.5 M432.5 297.0 L434.2 299.0 M439.4 300.4 L442.8 302.2 M497.1 373.2 L499.0 375.3 M429.7 316.5 L432.7 314.6 M405.5 295.2 L408.4 293.3 M437.0 314.5 L438.5 313.5 M423.0 302.4 L424.8 304.5 M444.6 317.7 L447.0 316.2 M413.3 307.4 L415.8 310.2 M487.9 365.2 L490.2 368.0 M397.3 286.7 L399.7 285.2 M401.1 300.4 L403.8 301.8 M457.2 323.6 L458.3 322.9 M476.8 346.5 L478.5 348.5 M480.2 351.3 L482.3 349.9 M483.0 356.3 L486.3 357.9 M474.9 364.5 L478.3 362.4 M445.3 308.3 L446.3 308.8 M413.1 292.8 L414.8 291.7 M419.0 301.4 L421.6 299.7 M391.9 283.2 L393.3 283.9 M425.9 317.9 L426.8 319.0 M425.0 300.6 L426.2 301.2 M438.4 306.0 L439.4 305.3 M473.1 342.3 L475.4 343.5 M499.8 376.4 L500.8 375.8 M490.0 363.5 L491.8 362.3 M428.4 317.9 L431.2 316.0 M466.0 342.6 L468.4 343.8 M469.2 346.9 L472.0 348.3 M430.8 323.2 L434.0 321.1 M475.9 364.1 L478.3 365.4 M495.2 373.7 L497.9 372.0 M467.8 334.6 L470.4 335.9 M434.9 314.5 L437.7 315.9 M409.6 309.2 L413.0 310.9 M415.5 292.0 L418.6 290.0 M466.0 335.2 L468.4 336.5 M497.1 391.2 L498.5 392.8 M429.6 310.5 L430.3 311.2 M412.6 291.8 L414.0 292.4 M475.6 356.8 L476.6 357.9 M432.9 312.4 L436.2 314.1 M451.6 319.0 L454.9 316.9 M468.0 336.9 L470.9 338.4 M425.2 315.8 L427.6 314.3 M497.5 391.2 L499.8 393.8 M392.6 282.6 L393.8 283.2 M471.2 346.4 L473.5 349.1 M488.6 372.8 L490.0 371.8 M464.6 349.9 L465.9 349.1 M424.4 302.5 L425.7 304.0 M452.8 320.8 L455.6 319.0 M423.5 310.3 L425.4 311.3 M417.7 313.1 L419.9 315.6 M471.2 356.4 L472.3 357.6 M428.1 301.2 L430.3 303.7 M423.2 312.1 L424.3 312.7 M427.8 295.5 L429.3 297.3 M448.5 318.4 L451.1 319.7 M405.8 294.7 L407.2 293.8 M435.4 304.9 L436.6 306.3 M467.9 340.9 L469.7 339.8 M449.7 311.7 L453.1 313.5 M419.4 294.0 L422.0 296.9 M418.7 314.8 L420.9 317.3 M484.8 366.7 L487.8 368.3 M423.9 310.1 L425.8 312.3 M600.8 297.4 L601.7 297.9 M571.4 284.2 L573.3 285.1 M505.7 196.7 L506.4 196.2 M485.8 201.2 L487.1 201.9 M602.5 296.5 L603.7 297.1 M511.4 255.6 L512.0 255.9 M570.1 233.2 L571.8 232.1 M472.7 306.9 L473.7 307.4 M443.5 297.3 L444.5 297.8 M510.7 226.6 L512.3 225.5 M466.5 288.0 L467.8 288.7 M458.1 223.3 L459.0 222.7 M520.5 301.2 L521.8 300.4 M478.8 265.1 L480.2 265.8 M543.3 232.8 L545.0 233.7 M569.2 207.8 L570.3 207.1 M519.0 336.1 L519.5 336.4 M510.2 216.5 L511.5 217.2 M570.5 299.3 L572.1 298.3 M525.0 314.0 L526.1 313.3 M419.5 296.6 L421.0 297.4 M517.2 306.7 L519.3 307.8 M494.4 280.2 L495.2 279.7 M472.2 303.5 L473.6 304.3 M507.0 369.6 L508.2 370.2 M528.8 266.4 L530.9 267.4 M582.7 275.5 L583.8 274.8 M436.9 310.9 L438.6 311.8 M505.0 324.7 L505.9 324.1 M572.0 251.0 L574.1 252.0 M425.9 233.2 L426.9 233.7 M605.2 286.6 L606.8 287.5 M542.0 259.4 L542.6 259.8 M556.6 280.3 L558.3 279.2 M407.2 270.3 L408.5 269.5 M572.2 282.6 L572.7 282.3 M479.3 305.4 L480.0 305.7 M563.6 246.7 L565.4 247.7 M521.9 303.9 L523.5 304.7 M412.7 273.5 L413.4 273.1 M508.4 264.4 L509.7 263.6 M552.3 229.3 L553.0 229.6 M448.0 216.5 L449.1 215.8 M471.7 225.2 L473.6 226.2 M560.9 227.4 L561.7 227.8 M564.2 254.2 L565.9 253.1 M541.1 201.0 L541.9 201.4 M545.7 272.0 L547.6 270.7 M582.8 236.0 L583.6 235.5 M428.0 257.8 L429.7 258.7 M600.9 290.9 L602.2 290.0 M407.8 244.4 L409.6 245.3 M415.4 308.6 L416.6 309.1 M414.5 317.8 L416.2 318.6 M504.3 336.0 L505.7 336.7 M544.8 343.4 L546.0 342.6 M618.9 273.5 L620.7 274.4 M623.6 287.9 L625.5 288.9 M555.6 291.9 L557.6 292.9 M394.4 248.7 L395.5 249.2 M395.8 258.2 L397.3 259.0 M459.9 207.8 L461.8 206.6 M516.6 226.4 L518.1 227.2 M580.3 225.0 L581.8 224.1 M512.1 291.1 L513.2 290.4 M393.2 275.4 L394.7 274.4 M419.3 241.4 L421.3 240.1 M468.4 222.1 L469.8 222.8 M418.9 240.5 L419.7 240.0 M492.7 231.4 L494.4 230.3 M420.1 286.4 L421.7 285.3 M472.8 288.5 L474.1 289.2 M501.9 316.7 L504.0 317.7 M423.6 218.5 L424.7 217.8 M408.1 235.2 L408.7 234.8 M582.2 302.6 L583.3 303.2 M518.5 327.3 L519.3 326.7 M467.3 207.7 L468.1 208.1 M480.3 199.8 L482.2 198.5 M424.8 321.4 L426.1 322.1 M381.8 233.1 L383.0 232.3 M564.6 320.2 L566.0 321.0 M603.8 260.7 L605.7 259.5 M566.7 263.6 L568.3 264.5 M465.4 315.6 L465.9 315.2 M613.6 271.2 L614.2 270.8 M472.7 292.0 L473.6 292.5 M427.4 221.3 L428.3 221.7 M456.0 289.3 L457.3 288.4 M501.5 344.4 L503.1 345.2 M567.0 203.7 L568.5 204.4 M494.3 293.4 L495.8 292.4 M559.0 235.0 L560.6 235.8 M382.5 263.7 L383.1 263.3 M420.5 291.8 L422.4 292.8 M465.1 259.7 L466.7 260.5 M485.5 204.0 L486.3 204.4 M495.1 290.9 L495.7 290.5 M556.2 187.1 L557.1 186.5 M406.7 258.2 L407.3 258.5 M402.2 220.3 L404.2 221.3 M504.1 382.6 L505.1 383.1 M486.5 241.2 L487.3 241.6 M481.4 272.5 L483.1 273.4 M464.5 225.6 L465.3 225.1 M511.0 292.0 L512.9 292.9 M496.2 213.8 L497.8 212.8 M474.4 234.6 L476.1 235.4 M428.8 323.1 L430.6 321.9 M542.8 238.7 L544.3 239.4 M516.0 323.6 L518.0 322.3 M555.3 246.6 L556.9 247.4 M415.1 255.4 L415.8 255.7 M563.5 206.7 L564.7 205.9 M502.6 244.8 L503.5 245.3 M535.8 191.3 L536.3 191.0 M506.3 347.7 L507.9 348.5 M408.6 220.1 L410.4 218.9 M604.8 251.6 L605.6 251.1 M538.2 235.3 L539.9 236.2 M483.8 360.6 L485.2 359.6 M495.8 234.2 L497.8 235.2 M433.9 310.1 L435.8 308.8 M467.0 265.4 L467.8 264.9 M476.7 299.1 L478.4 300.0 M474.3 259.4 L474.9 259.0 M420.1 278.7 L420.6 278.3 M569.4 210.2 L570.6 210.8 M500.6 365.5 L502.0 366.1 M414.4 232.9 L415.6 232.2 M494.8 208.1 L496.1 207.2 M497.3 183.7 L499.2 184.7 M509.5 210.3 L510.7 209.6 M490.2 203.6 L491.3 202.9 M453.2 236.9 L454.5 237.5 M491.0 331.8 L492.6 332.7 M390.7 239.9 L392.6 240.8 M501.3 371.7 L502.8 370.8 M484.2 331.5 L485.1 331.9 M531.1 285.0 L532.4 285.7 M484.2 353.5 L484.8 353.8 M497.1 337.4 L498.1 337.9 M604.6 292.3 L606.3 291.2 M468.8 199.4 L469.8 199.9 M583.2 288.4 L584.3 287.7 M553.4 296.2 L554.1 296.5 M570.9 308.4 L572.2 307.5 M593.8 263.9 L595.1 264.6 M578.3 319.9 L579.9 320.7 M552.4 337.5 L553.7 336.7" fill="none" stroke="#263238" stroke-width="0.8" opacity="0.9"/>
<path d="M584.7 284.1 L589.0 281.3 M517.0 285.5 L521.7 282.5 M572.5 331.7 L579.6 327.1 M547.7 321.1 L551.2 318.8 M554.6 271.9 L559.1 274.3 M502.4 321.6 L505.7 319.4 M601.3 264.3 L604.9 261.9 M508.5 328.1 L513.0 330.4 M534.4 297.4 L541.7 292.6 M587.9 292.5 L595.9 296.5 M504.4 379.8 L508.6 382.0 M552.2 289.8 L558.7 285.6 M571.2 329.4 L574.8 331.2 M524.9 312.4 L530.7 308.6 M561.0 320.2 L565.7 322.6 M555.4 332.6 L562.3 328.1 M489.5 330.3 L497.2 334.2 M578.5 260.5 L581.6 258.5 M564.5 267.5 L568.6 264.8 M611.4 259.0 L617.7 262.1 M499.5 310.3 L507.0 305.5 M489.8 326.9 L492.8 325.0 M507.5 351.2 L512.8 347.8 M529.4 352.5 L536.8 347.7 M620.8 262.6 L624.3 264.4 M617.7 265.9 L624.6 261.5 M482.9 371.1 L488.8 374.2 M580.6 262.1 L583.5 260.3 M529.3 300.6 L536.4 296.1 M534.6 355.5 L540.8 358.7 M547.6 284.2 L551.0 282.0 M528.9 284.8 L534.9 287.8 M524.1 298.1 L527.9 300.0 M492.2 350.0 L496.1 352.0 M511.3 310.5 L515.7 307.7 M498.7 365.3 L503.0 362.5 M598.9 305.4 L604.3 301.9 M622.4 260.0 L625.2 258.1 M543.0 273.1 L546.6 270.8 M585.4 284.6 L592.8 288.4 M580.2 303.6 L583.6 305.3 M496.8 326.9 L503.8 330.5 M604.8 290.2 L614.3 295.0 M587.8 261.1 L597.1 265.9 M615.8 259.3 L623.4 263.1 M588.9 274.2 L594.7 277.1 M585.8 257.4 L595.5 262.3 M602.8 252.6 L606.7 254.6 M602.9 291.1 L606.6 293.0 M612.8 253.2 L617.5 255.6 M586.0 263.0 L593.8 267.0 M595.8 287.1 L601.6 290.1 M611.6 262.8 L616.6 265.4 M610.1 270.2 L615.4 272.9 M588.6 284.4 L595.1 287.7 M602.8 274.9 L606.8 276.9 M599.0 282.0 L606.6 285.8 M604.8 254.2 L609.8 256.8 M607.7 271.3 L617.1 276.1 M607.0 274.1 L612.6 276.9 M615.3 275.1 L622.9 279.0 M616.4 272.3 L626.1 277.2 M621.7 258.8 L627.1 261.6 M585.1 275.6 L591.6 278.9 M614.3 283.8 L623.7 288.5 M614.3 253.2 L618.5 255.4 M598.6 259.3 L608.3 264.2 M613.3 256.3 L619.6 259.5 M524.4 236.8 L524.4 242.1 M581.6 245.7 L586.1 248.0 M573.0 205.4 L573.0 207.9 M547.7 185.0 L547.7 188.3 M550.8 219.0 L553.2 220.2 M547.8 207.7 L547.8 211.5 M580.9 250.9 L580.9 253.9 M556.8 186.2 L556.8 189.3 M560.7 203.1 L564.7 205.2 M570.0 232.2 L572.7 233.6 M540.6 188.0 L545.4 190.5 M569.2 253.2 L571.7 254.5 M503.7 266.8 L503.7 269.6 M477.7 263.6 L477.7 266.3 M509.7 237.0 L513.5 234.6 M484.6 248.7 L484.6 250.7 M533.7 254.1 L536.7 252.1 M472.3 275.3 L475.1 273.5 M477.6 288.5 L479.3 287.4 M510.7 284.6 L514.7 281.9" fill="none" stroke="#263238" stroke-width="1.7" opacity="0.92"/>
<path d="M592 257.6 L622 271.6 M588 266 L626 284 M590 276.4 L618 289.4 M597 288 L612 295 M604 254 L626 264.4 M575 200 L575.4 222 M579 214 L579.2 236 M570.6 206 L570.8 216 M566 226 L566 240 M574 232 L574.2 246" fill="none" stroke="#263238" stroke-width="1.5" opacity="0.9"/>
<path d="M563.4 281.7 L605 304 M509.8 329.4 L569.4 290.7 M497.9 317.5 L539.6 290.7 M524.7 341.3 L578.3 308.5 M546 262 L590 284 M516 352 L556 326 M534 300 L566 317 M520 286 L548 301" fill="none" stroke="#263238" stroke-width="1" stroke-dasharray="6 2 3 4 9 3 2 5" opacity="0.9"/>
<path d="M590 252 L602 258 L601 262 L589 257 Z M592 266 L622 280 L620 283.4 L591 270.4 Z M596 286 L612 293.6 L610 296.4 L595 289.4 Z" fill="#263238" opacity="0.9"/>
<path d="M449.2 341.5 L452.5 339.4 M495.5 383.3 L497.8 381.8 M461.1 360.4 L466.6 356.8 M436.7 321.1 L439.9 324.7 M442.9 335.3 L446.1 333.2 M452.9 361.0 L456.2 358.8 M449.5 334.9 L454.6 331.6 M435.3 326.4 L440.4 323.1 M441.0 336.7 L443.6 335.1 M444.3 350.2 L446.2 352.4 M446.6 354.1 L452.4 350.4 M465.2 363.3 L469.2 368.0 M470.5 370.2 L474.8 367.5 M459.0 345.1 L464.8 341.3 M446.8 350.6 L449.2 349.1 M469.7 363.9 L473.3 361.6 M463.2 364.2 L468.1 361.0 M451.1 332.4 L455.7 329.4 M464.5 367.0 L466.4 369.1 M469.2 375.3 L473.4 380.1 M492.1 374.2 L495.0 377.6 M445.9 353.1 L448.7 351.2 M467.5 373.4 L471.6 378.2 M441.3 328.0 L443.8 330.8 M440.7 340.3 L443.7 338.3 M498.8 388.3 L500.4 390.2 M459.8 368.1 L463.7 365.6 M488.1 378.5 L490.9 376.7 M450.2 357.5 L454.2 354.9 M462.5 338.8 L468.3 335.0 M441.3 343.7 L446.8 340.1 M448.9 347.2 L450.6 349.1 M451.2 338.0 L453.5 340.7 M447.8 330.2 L453.3 326.6 M452.2 346.6 L454.6 349.4 M470.4 360.4 L475.3 357.2 M470.6 372.2 L474.8 369.5 M464.6 366.8 L468.9 364.0" fill="none" stroke="#01c29b" stroke-width="1.4"/>
<g fill="#263238">
<path d="M509.2 268.6 L511.6 267 L512.2 273 L509.8 274.6 Z"/>
<path d="M587 196 L595.6 199.6 L595.6 208 L587 204.4 Z"/>
</g>
</svg>
<div class="abs" style="left:791px;top:59px;width:182px;height:398px;background:#fff;"></div>
<div class="abs" style="left:791px;top:81.6px;width:182px;height:1px;background:#e2e4e8;"></div>
<div class="abs" style="left:791px;top:80.2px;width:92.8px;height:1.9px;background:#1b2740;"></div>
<div class="item" style="top:130.0px;height:35.0px"></div>
<svg style="left:961.3px;top:139.2px" width="6.4" height="7.6" viewBox="0 0 6.4 7.6"><path d="M3.2 0.2 C3.6 0.2 3.8 0.5 3.8 0.9 C4.9 1.2 5.4 2.1 5.4 3.2 V5 L6.2 5.8 V6.2 H0.2 V5.8 L1 5 V3.2 C1 2.1 1.5 1.2 2.6 0.9 C2.6 0.5 2.8 0.2 3.2 0.2 Z M2.5 6.6 H3.9 C3.9 7 3.6 7.4 3.2 7.4 C2.8 7.4 2.5 7 2.5 6.6 Z" fill="#1b2a45"/></svg>
<div class="item" style="top:165.8px;height:35.0px"></div>
<svg style="left:961.3px;top:174.9px" width="6.4" height="7.6" viewBox="0 0 6.4 7.6"><path d="M3.2 0.2 C3.6 0.2 3.8 0.5 3.8 0.9 C4.9 1.2 5.4 2.1 5.4 3.2 V5 L6.2 5.8 V6.2 H0.2 V5.8 L1 5 V3.2 C1 2.1 1.5 1.2 2.6 0.9 C2.6 0.5 2.8 0.2 3.2 0.2 Z M2.5 6.6 H3.9 C3.9 7 3.6 7.4 3.2 7.4 C2.8 7.4 2.5 7 2.5 6.6 Z" fill="#1b2a45"/></svg>
<div class="item" style="top:201.5px;height:35.0px"></div>
<svg style="left:961.3px;top:210.7px" width="6.4" height="7.6" viewBox="0 0 6.4 7.6"><path d="M3.2 0.2 C3.6 0.2 3.8 0.5 3.8 0.9 C4.9 1.2 5.4 2.1 5.4 3.2 V5 L6.2 5.8 V6.2 H0.2 V5.8 L1 5 V3.2 C1 2.1 1.5 1.2 2.6 0.9 C2.6 0.5 2.8 0.2 3.2 0.2 Z M2.5 6.6 H3.9 C3.9 7 3.6 7.4 3.2 7.4 C2.8 7.4 2.5 7 2.5 6.6 Z" fill="#1b2a45"/></svg>
<div class="item" style="top:237.2px;height:35.0px"></div>
<svg style="left:961.3px;top:246.4px" width="6.4" height="7.6" viewBox="0 0 6.4 7.6"><path d="M3.2 0.2 C3.6 0.2 3.8 0.5 3.8 0.9 C4.9 1.2 5.4 2.1 5.4 3.2 V5 L6.2 5.8 V6.2 H0.2 V5.8 L1 5 V3.2 C1 2.1 1.5 1.2 2.6 0.9 C2.6 0.5 2.8 0.2 3.2 0.2 Z M2.5 6.6 H3.9 C3.9 7 3.6 7.4 3.2 7.4 C2.8 7.4 2.5 7 2.5 6.6 Z" fill="#1b2a45"/></svg>
<div class="item" style="top:273.0px;height:35.0px"></div>
<svg style="left:961.3px;top:282.2px" width="6.4" height="7.6" viewBox="0 0 6.4 7.6"><path d="M3.2 0.2 C3.6 0.2 3.8 0.5 3.8 0.9 C4.9 1.2 5.4 2.1 5.4 3.2 V5 L6.2 5.8 V6.2 H0.2 V5.8 L1 5 V3.2 C1 2.1 1.5 1.2 2.6 0.9 C2.6 0.5 2.8 0.2 3.2 0.2 Z M2.5 6.6 H3.9 C3.9 7 3.6 7.4 3.2 7.4 C2.8 7.4 2.5 7 2.5 6.6 Z" fill="#1b2a45"/></svg>
<div class="item" style="top:308.8px;height:35.0px"></div>
<svg style="left:961.3px;top:317.9px" width="6.4" height="7.6" viewBox="0 0 6.4 7.6"><path d="M3.2 0.2 C3.6 0.2 3.8 0.5 3.8 0.9 C4.9 1.2 5.4 2.1 5.4 3.2 V5 L6.2 5.8 V6.2 H0.2 V5.8 L1 5 V3.2 C1 2.1 1.5 1.2 2.6 0.9 C2.6 0.5 2.8 0.2 3.2 0.2 Z M2.5 6.6 H3.9 C3.9 7 3.6 7.4 3.2 7.4 C2.8 7.4 2.5 7 2.5 6.6 Z" fill="#1b2a45"/></svg>
<div class="item" style="top:344.5px;height:35.0px"></div>
<svg style="left:961.3px;top:353.7px" width="6.4" height="7.6" viewBox="0 0 6.4 7.6"><path d="M3.2 0.2 C3.6 0.2 3.8 0.5 3.8 0.9 C4.9 1.2 5.4 2.1 5.4 3.2 V5 L6.2 5.8 V6.2 H0.2 V5.8 L1 5 V3.2 C1 2.1 1.5 1.2 2.6 0.9 C2.6 0.5 2.8 0.2 3.2 0.2 Z M2.5 6.6 H3.9 C3.9 7 3.6 7.4 3.2 7.4 C2.8 7.4 2.5 7 2.5 6.6 Z" fill="#1b2a45"/></svg>
<div class="item" style="top:380.2px;height:35.0px"></div>
<svg style="left:961.3px;top:389.4px" width="6.4" height="7.6" viewBox="0 0 6.4 7.6"><path d="M3.2 0.2 C3.6 0.2 3.8 0.5 3.8 0.9 C4.9 1.2 5.4 2.1 5.4 3.2 V5 L6.2 5.8 V6.2 H0.2 V5.8 L1 5 V3.2 C1 2.1 1.5 1.2 2.6 0.9 C2.6 0.5 2.8 0.2 3.2 0.2 Z M2.5 6.6 H3.9 C3.9 7 3.6 7.4 3.2 7.4 C2.8 7.4 2.5 7 2.5 6.6 Z" fill="#1b2a45"/></svg>
<div class="item" style="top:416.0px;height:21.0px"></div>
<svg style="left:961.3px;top:425.2px" width="6.4" height="7.6" viewBox="0 0 6.4 7.6"><path d="M3.2 0.2 C3.6 0.2 3.8 0.5 3.8 0.9 C4.9 1.2 5.4 2.1 5.4 3.2 V5 L6.2 5.8 V6.2 H0.2 V5.8 L1 5 V3.2 C1 2.1 1.5 1.2 2.6 0.9 C2.6 0.5 2.8 0.2 3.2 0.2 Z M2.5 6.6 H3.9 C3.9 7 3.6 7.4 3.2 7.4 C2.8 7.4 2.5 7 2.5 6.6 Z" fill="#1b2a45"/></svg>
<span id="t37" class="t" style="left:799.0px;top:138.80px;font-size:6.8px;color:#2f3440;-webkit-text-stroke:.12px #2f3440;transform:scaleX(0.986);">1-1A-741-M</span>
<span id="t38" class="t" style="left:799.0px;top:151.80px;font-size:5.8px;color:#333;transform:scaleX(0.948);">Unknown Services</span>
<span id="t39" class="t" style="left:890.4px;top:140.90px;font-size:5.0px;color:#333;transform:scaleX(0.973);">RCA: -</span>
<span id="t40" class="t r" style="right:69.2px;top:150.55px;font-size:5.9px;color:#333;transform:scaleX(0.923);">Corrosion:<b>MODERATE</b></span>
<span id="t41" class="t" style="left:799.0px;top:174.55px;font-size:6.8px;color:#2f3440;-webkit-text-stroke:.12px #2f3440;transform:scaleX(0.946);">1-CI-8055-R</span>
<span id="t42" class="t" style="left:799.0px;top:187.55px;font-size:5.8px;color:#333;transform:scaleX(0.944);">Other Services</span>
<span id="t43" class="t" style="left:890.4px;top:176.65px;font-size:5.0px;color:#333;transform:scaleX(0.973);">RCA: -</span>
<span id="t44" class="t r" style="right:69.2px;top:186.30px;font-size:5.9px;color:#333;transform:scaleX(0.943);">Corrosion:<b>LIGHT</b></span>
<span id="t45" class="t" style="left:799.0px;top:210.30px;font-size:6.8px;color:#2f3440;-webkit-text-stroke:.12px #2f3440;transform:scaleX(0.966);">1-CI-8058-R</span>
<span id="t46" class="t" style="left:799.0px;top:223.30px;font-size:5.8px;color:#333;transform:scaleX(0.944);">Other Services</span>
<span id="t47" class="t" style="left:890.4px;top:212.40px;font-size:5.0px;color:#333;transform:scaleX(0.973);">RCA: -</span>
<span id="t48" class="t r" style="right:69.2px;top:222.05px;font-size:5.9px;color:#333;transform:scaleX(0.946);">Corrosion:<b>HEAVY</b></span>
<span id="t49" class="t" style="left:799.0px;top:246.05px;font-size:6.8px;color:#2f3440;-webkit-text-stroke:.12px #2f3440;transform:scaleX(0.966);">1-CI-8119-R</span>
<span id="t50" class="t" style="left:799.0px;top:259.05px;font-size:5.8px;color:#333;transform:scaleX(0.944);">Other Services</span>
<span id="t51" class="t" style="left:890.4px;top:248.15px;font-size:5.0px;color:#333;transform:scaleX(0.973);">RCA: -</span>
<span id="t52" class="t r" style="right:69.2px;top:257.80px;font-size:5.9px;color:#333;transform:scaleX(0.937);">Corrosion:<b>CLEAN</b></span>
<span id="t53" class="t" style="left:799.0px;top:281.80px;font-size:6.8px;color:#2f3440;-webkit-text-stroke:.12px #2f3440;transform:scaleX(0.966);">1-DC-651-A</span>
<span id="t54" class="t" style="left:799.0px;top:294.80px;font-size:5.8px;color:#333;transform:scaleX(0.944);">Other Services</span>
<span id="t55" class="t" style="left:890.4px;top:283.90px;font-size:5.0px;color:#333;transform:scaleX(0.973);">RCA: -</span>
<span id="t56" class="t r" style="right:69.2px;top:293.55px;font-size:5.9px;color:#333;transform:scaleX(0.923);">Corrosion:<b>MODERATE</b></span>
<span id="t57" class="t" style="left:799.0px;top:317.55px;font-size:6.8px;color:#2f3440;-webkit-text-stroke:.12px #2f3440;transform:scaleX(0.966);">1-DF-8027-AM</span>
<span id="t58" class="t" style="left:799.0px;top:330.55px;font-size:5.8px;color:#333;transform:scaleX(0.957);">Low Pressure Fluid Systems</span>
<span id="t59" class="t" style="left:890.4px;top:319.65px;font-size:5.0px;color:#333;transform:scaleX(0.973);">RCA: -</span>
<span id="t60" class="t r" style="right:69.2px;top:329.30px;font-size:5.9px;color:#333;transform:scaleX(0.923);">Corrosion:<b>MODERATE</b></span>
<span id="t61" class="t" style="left:799.0px;top:353.30px;font-size:6.8px;color:#2f3440;-webkit-text-stroke:.12px #2f3440;transform:scaleX(0.966);">1-DF-8035-AM</span>
<span id="t62" class="t" style="left:799.0px;top:366.30px;font-size:5.8px;color:#333;transform:scaleX(0.957);">Low Pressure Fluid Systems</span>
<span id="t63" class="t" style="left:890.4px;top:355.40px;font-size:5.0px;color:#333;transform:scaleX(0.973);">RCA: -</span>
<span id="t64" class="t r" style="right:69.2px;top:365.05px;font-size:5.9px;color:#333;transform:scaleX(0.923);">Corrosion:<b>MODERATE</b></span>
<span id="t65" class="t" style="left:799.0px;top:389.05px;font-size:6.8px;color:#2f3440;-webkit-text-stroke:.12px #2f3440;transform:scaleX(0.966);">1-DO-6092-A</span>
<span id="t66" class="t" style="left:799.0px;top:402.05px;font-size:5.8px;color:#333;transform:scaleX(0.944);">Other Services</span>
<span id="t67" class="t" style="left:890.4px;top:391.15px;font-size:5.0px;color:#333;transform:scaleX(0.973);">RCA: -</span>
<span id="t68" class="t r" style="right:69.2px;top:400.80px;font-size:5.9px;color:#333;transform:scaleX(0.923);">Corrosion:<b>MODERATE</b></span>
<span id="t69" class="t" style="left:799.0px;top:424.80px;font-size:6.8px;color:#2f3440;-webkit-text-stroke:.12px #2f3440;transform:scaleX(0.966);">1-DO-655-A</span>
<span id="t70" class="t" style="left:799.0px;top:437.80px;font-size:5.8px;color:#333;transform:scaleX(0.944);">Other Services</span>
<span id="t71" class="t" style="left:890.4px;top:426.90px;font-size:5.0px;color:#333;transform:scaleX(0.973);">RCA: -</span>
<span id="t72" class="t r" style="right:69.2px;top:436.55px;font-size:5.9px;color:#333;transform:scaleX(0.943);">Corrosion:<b>LIGHT</b></span>
<div class="abs" style="left:791px;top:436.5px;width:182px;height:20.5px;background:#fff;"></div>
<div class="abs" style="left:32px;top:457px;width:941px;height:15px;background:#0e1826;"></div>
<span id="t0" class="t" style="left:41.2px;top:39.40px;font-size:9.8px;color:#e4e6ea;-webkit-text-stroke:.3px #e4e6ea;transform:scaleX(1.293);">ABYSS FABRIC</span>
<span id="t1" class="t" style="left:148.1px;top:41.50px;font-size:6.6px;color:#fff;font-weight:700;transform:scaleX(0.817);">Example Platform 2</span>
<span id="t2" class="t" style="left:250.0px;top:40.80px;font-size:7.6px;color:#fff;font-weight:700;transform:scaleX(0.849);">Switch To Classic Mode</span>
<span id="t3" class="t" style="left:390.5px;top:37.50px;font-size:7.6px;color:#fff;font-weight:700;transform:scaleX(0.859);">INSIGHTS</span>
<span id="t4" class="t" style="left:435.6px;top:37.50px;font-size:7.6px;color:#fff;font-weight:700;transform:scaleX(0.821);">VIEWER</span>
<span id="t5" class="t" style="left:474.7px;top:37.50px;font-size:7.6px;color:#fff;font-weight:700;transform:scaleX(0.815);">DECK PLAN</span>
<span id="t6" class="t" style="left:525.8px;top:37.50px;font-size:7.6px;color:#fff;font-weight:700;transform:scaleX(0.784);">REPORTS</span>
<span id="t7" class="t" style="left:569.6px;top:37.50px;font-size:7.6px;color:#fff;font-weight:700;transform:scaleX(0.800);">FABRIC TOOLS</span>
<span id="t8" class="t" style="left:846.5px;top:33.60px;font-size:7.2px;color:#fff;font-weight:700;transform:scaleX(0.851);">Muhammad Ehsan Ullah Kayani</span>
<span id="t9" class="t" style="left:846.5px;top:44.20px;font-size:6.2px;color:#fff;font-weight:700;transform:scaleX(0.860);">Abyss User</span>
<span id="t10" class="t" style="left:950.4px;top:37.70px;font-size:10.4px;color:#fff;transform:scaleX(1.144);">M</span>
<span id="t11" class="t" style="left:242.0px;top:68.90px;font-size:7.6px;color:#fff;font-weight:700;transform:scaleX(0.829);">COPY VIEW LINK</span>
<span id="t12" class="t" style="left:327.2px;top:68.90px;font-size:7.6px;color:#fff;font-weight:700;transform:scaleX(0.804);">MEASURE TOOL</span>
<span id="t13" class="t" style="left:43.9px;top:68.00px;font-size:8.6px;color:#1f2c4a;font-weight:700;transform:scaleX(0.809);">Query</span>
<span id="t14" class="t" style="left:52.2px;top:89.30px;font-size:5.6px;color:#111;transform:scaleX(0.842);">Clear Query</span>
<span id="t15" class="t" style="left:41.9px;top:111.00px;font-size:8.0px;color:#243250;-webkit-text-stroke:.25px #243250;transform:scaleX(0.805);">Decks</span>
<span id="t16" class="t" style="left:41.9px;top:133.00px;font-size:8.0px;color:#243250;-webkit-text-stroke:.25px #243250;transform:scaleX(0.840);">Paint Blocks</span>
<span id="t17" class="t" style="left:41.9px;top:155.60px;font-size:8.0px;color:#243250;-webkit-text-stroke:.25px #243250;transform:scaleX(0.805);">Group</span>
<span id="t18" class="t" style="left:41.9px;top:189.00px;font-size:8.0px;color:#243250;-webkit-text-stroke:.25px #243250;transform:scaleX(0.815);">Equipment Tag</span>
<span id="t19" class="t" style="left:41.9px;top:295.00px;font-size:8.0px;color:#243250;-webkit-text-stroke:.25px #243250;transform:scaleX(0.806);">Service</span>
<span id="t20" class="t" style="left:41.9px;top:316.70px;font-size:8.0px;color:#243250;-webkit-text-stroke:.25px #243250;transform:scaleX(0.821);">Size</span>
<span id="t21" class="t" style="left:41.9px;top:338.50px;font-size:8.0px;color:#243250;-webkit-text-stroke:.25px #243250;transform:scaleX(0.821);">Spec</span>
<span id="t22" class="t" style="left:41.9px;top:360.60px;font-size:8.0px;color:#243250;-webkit-text-stroke:.25px #243250;transform:scaleX(0.821);">Circuit</span>
<span id="t23" class="t" style="left:41.9px;top:382.70px;font-size:8.0px;color:#243250;-webkit-text-stroke:.25px #243250;transform:scaleX(0.838);">Insulation Thickness</span>
<span id="t24" class="t" style="left:41.9px;top:405.00px;font-size:8.0px;color:#243250;-webkit-text-stroke:.25px #243250;transform:scaleX(0.835);">Insulation Type</span>
<span id="t25" class="t" style="left:92.7px;top:189.90px;font-size:6.4px;color:#333;font-weight:700;transform:scaleX(0.842);">1</span>
<span id="t26" class="t" style="left:37.7px;top:206.90px;font-size:6.2px;color:#7d97bd;transform:scaleX(0.894);">Search Equipment Tag</span>
<span id="t27" class="t" style="left:37.7px;top:217.70px;font-size:8.4px;color:#3a3a3a;transform:scaleX(0.905);">3110</span>
<span id="t28" class="t" style="left:70.8px;top:237.60px;font-size:6.6px;color:#333;transform:scaleX(0.959);">8-PL-3110-A</span>
<span id="t29" class="t" style="left:70.8px;top:261.90px;font-size:6.6px;color:#333;transform:scaleX(0.984);">MAF-3110</span>
<span id="t30" class="t" style="left:87.4px;top:444.20px;font-size:7.8px;color:#fff;font-weight:700;transform:scaleX(0.840);">APPLY QUERY</span>
<span id="t31" class="t" style="left:37.4px;top:461.60px;font-size:6.2px;color:#fff;font-weight:700;transform:scaleX(0.894);">© 2023 Abyss Solutions - all trademarks are the property of their respective owners</span>
<span id="t32" class="t" style="left:943.8px;top:460.70px;font-size:8.2px;color:#fff;font-weight:700;transform:scaleX(0.915);">v2.75.4</span>
<span id="t33" class="t" style="left:817.0px;top:66.90px;font-size:7.0px;color:#3a3a3a;letter-spacing:.3px;transform:scaleX(0.851);">COMPONENT</span>
<span id="t34" class="t" style="left:896.6px;top:66.90px;font-size:7.0px;color:#7fa0cf;letter-spacing:.3px;transform:scaleX(0.829);">POINTS OF INTEREST</span>
<span id="t35" class="t" style="left:803.5px;top:95.60px;font-size:20.2px;color:#1b3155;transform:scaleX(1.073);">2063</span>
<span id="t36" class="t" style="left:856.7px;top:107.00px;font-size:8.0px;color:#33405a;transform:scaleX(0.963);">Total lines found</span>
</body></html>
